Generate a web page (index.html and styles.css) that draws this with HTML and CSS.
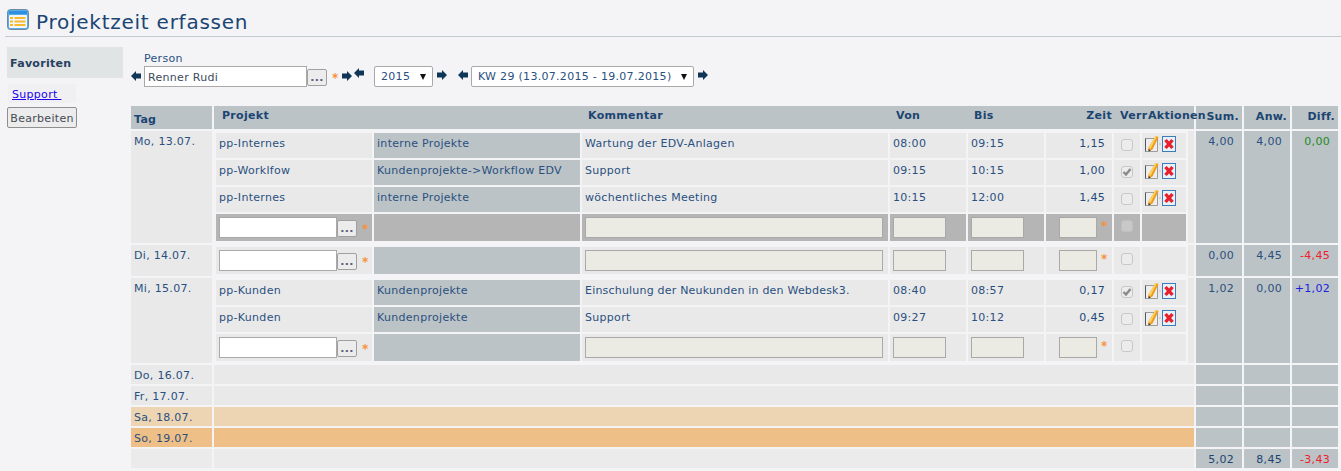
FILE: index.html
```html
<!DOCTYPE html>
<html lang="de">
<head>
<meta charset="utf-8">
<title>Projektzeit erfassen</title>
<link rel="stylesheet" href="styles.css">
</head>
<body>
<svg class="defs" width="0" height="0" aria-hidden="true">
  <defs>
    <symbol id="arrow-r" viewBox="0 0 10 10"><path d="M0 2.500H5V0L10 5 5 10V7.500H0Z" fill="#0f3657"/></symbol>
    <symbol id="arrow-l" viewBox="0 0 10 10"><path d="M10 2.500H5V0L0 5 5 10V7.500H10Z" fill="#0f3657"/></symbol>
    <symbol id="edit" viewBox="0 0 16 16">
      <path d="M.5 2.500H12.500V15.500H.5Z" fill="#ededf0" stroke="#9a9ca0"/>
      <path d="M.5 2.500V15.500" stroke="#55575c"/>
      <path d="M14.500 6.500 16 8 14.500 9.500Z" fill="#c4c4c4"/>
      <path d="M10.500 0 13.500 1 7.500 13.500 3.500 15.500 3.500 11.500Z" fill="#f09a1c"/>
      <path d="M10.500 0 11.800.4 5.500 13 3.500 11.500Z" fill="#fbd35a"/>
      <path d="M3.500 15.500 3.500 13 5.800 14.500Z" fill="#3a3a3a"/>
    </symbol>
    <symbol id="delete" viewBox="0 0 14 16">
      <rect x=".5" y=".5" width="13" height="15" fill="#e6f1fa" stroke="#3d7cb8"/>
      <path d="M3.500 4 10.500 12M10.500 4 3.500 12" stroke="#e8202c" stroke-width="3.400"/>
    </symbol>
    <symbol id="check" viewBox="0 0 12 12"><path d="M2.500 6 5 8.500 9.500 3" fill="none" stroke="#8a8a8a" stroke-width="2.400"/></symbol>
  </defs>
</svg>

<header class="page-head">
  <svg class="head-icon" viewBox="0 0 22 22" aria-hidden="true">
    <rect x=".5" y=".5" width="21" height="20" rx="3" fill="#5badea" stroke="#6d8aa0"/>
    <rect x="2" y="2" width="18" height="3" fill="#2f8fe0"/>
    <rect x="2" y="6" width="18" height="13" rx="1" fill="#f3f7fb"/>
    <path d="M3 8H6V10H3ZM3 11.500H6V13.500H3ZM3 15H6V17H3ZM7.500 8H18.500V10H7.500ZM7.500 11.500H18.500V13.500H7.500ZM7.500 15H18.500V17H7.500Z" fill="#f7b92e"/>
  </svg>
  <h1 class="page-title">Projektzeit erfassen</h1>
</header>

<div class="page-body">
  <aside class="sidebar">
    <div class="fav-title">Favoriten</div>
    <div class="fav-item"><a href="#" class="fav-link">Support&nbsp;</a></div>
    <button class="btn-edit" type="button">Bearbeiten</button>
  </aside>

  <main class="content">
    <div class="filters">
      <svg class="arrow arrow-first"><use href="#arrow-l"/></svg>
      <div class="person">
        <label class="person-label">Person</label>
        <div class="picker">
          <input class="field person-input" type="text" value="Renner Rudi">
          <button class="dots" type="button">...</button>
          <span class="req">*</span>
        </div>
      </div>
      <svg class="arrow arrow-next"><use href="#arrow-r"/></svg>
      <svg class="arrow arrow-raised"><use href="#arrow-l"/></svg>
      <div class="select select-year"><span>2015</span><i class="caret"></i></div>
      <svg class="arrow arrow-year"><use href="#arrow-r"/></svg>
      <svg class="arrow arrow-week"><use href="#arrow-l"/></svg>
      <div class="select select-week"><span>KW 29 (13.07.2015 - 19.07.2015)</span><i class="caret"></i></div>
      <svg class="arrow arrow-last"><use href="#arrow-r"/></svg>
    </div>

    <table class="sheet">
      <colgroup><col class="c-day"><col class="c-main"><col class="c-sum"><col class="c-sum"><col class="c-sum"></colgroup>
      <thead>
        <tr>
          <th class="h-day">Tag</th>
          <th class="h-main">
            <div class="h-inner">
              <span class="h-projekt">Projekt</span>
              <span class="h-komm">Kommentar</span>
              <span class="h-von">Von</span>
              <span class="h-bis">Bis</span>
              <span class="h-zeit">Zeit</span>
              <span class="h-verr">Verr</span>
              <span class="h-akt">Aktionen</span>
            </div>
          </th>
          <th class="h-num">Sum.</th>
          <th class="h-num">Anw.</th>
          <th class="h-num">Diff.</th>
        </tr>
      </thead>
      <tbody>
        <tr>
          <td class="day">Mo, 13.07.</td>
          <td class="main">
            <div class="detail">
              <table class="entries">
                <colgroup><col class="e1"><col class="e2"><col class="e3"><col class="e4"><col class="e4"><col class="e5"><col class="e6"><col class="e7"></colgroup>
                <tr>
                  <td>pp-Internes</td><td class="cat">interne Projekte</td><td>Wartung der EDV-Anlagen</td><td>08:00</td><td>09:15</td><td class="zeit">1,15</td>
                  <td class="chk"><span class="box"></span></td>
                  <td class="act"><svg class="i-edit"><use href="#edit"/></svg><svg class="i-del"><use href="#delete"/></svg></td>
                </tr>
                <tr>
                  <td>pp-Worklfow</td><td class="cat">Kundenprojekte-&gt;Workflow EDV</td><td>Support</td><td>09:15</td><td>10:15</td><td class="zeit">1,00</td>
                  <td class="chk"><span class="box"><svg class="i-check"><use href="#check"/></svg></span></td>
                  <td class="act"><svg class="i-edit"><use href="#edit"/></svg><svg class="i-del"><use href="#delete"/></svg></td>
                </tr>
                <tr>
                  <td>pp-Internes</td><td class="cat">interne Projekte</td><td>wöchentliches Meeting</td><td>10:15</td><td>12:00</td><td class="zeit">1,45</td>
                  <td class="chk"><span class="box"></span></td>
                  <td class="act"><svg class="i-edit"><use href="#edit"/></svg><svg class="i-del"><use href="#delete"/></svg></td>
                </tr>
                <tr class="new active">
                  <td><div class="picker"><input class="field proj-input" type="text"><button class="dots" type="button">...</button><span class="req">*</span></div></td>
                  <td class="cat"></td>
                  <td><input class="field off komm-input" type="text"></td>
                  <td><input class="field off time-input" type="text"></td>
                  <td><input class="field off time-input" type="text"></td>
                  <td class="zeit-new"><input class="field off zeit-input" type="text"><span class="req">*</span></td>
                  <td class="chk"><span class="box"></span></td>
                  <td></td>
                </tr>
              </table>
              <div class="strip"></div>
            </div>
          </td>
          <td class="num">4,00</td><td class="num">4,00</td><td class="num pos">0,00</td>
        </tr>
        <tr>
          <td class="day">Di, 14.07.</td>
          <td class="main">
            <div class="detail">
              <table class="entries">
                <colgroup><col class="e1"><col class="e2"><col class="e3"><col class="e4"><col class="e4"><col class="e5"><col class="e6"><col class="e7"></colgroup>
                <tr class="new">
                  <td><div class="picker"><input class="field proj-input" type="text"><button class="dots" type="button">...</button><span class="req">*</span></div></td>
                  <td class="cat"></td>
                  <td><input class="field off komm-input" type="text"></td>
                  <td><input class="field off time-input" type="text"></td>
                  <td><input class="field off time-input" type="text"></td>
                  <td class="zeit-new"><input class="field off zeit-input" type="text"><span class="req">*</span></td>
                  <td class="chk"><span class="box"></span></td>
                  <td></td>
                </tr>
              </table>
              <div class="strip"></div>
            </div>
          </td>
          <td class="num">0,00</td><td class="num">4,45</td><td class="num neg">-4,45</td>
        </tr>
        <tr>
          <td class="day">Mi, 15.07.</td>
          <td class="main">
            <div class="detail">
              <table class="entries">
                <colgroup><col class="e1"><col class="e2"><col class="e3"><col class="e4"><col class="e4"><col class="e5"><col class="e6"><col class="e7"></colgroup>
                <tr>
                  <td>pp-Kunden</td><td class="cat">Kundenprojekte</td><td class="tight">Einschulung der Neukunden in den Webdesk3.</td><td>08:40</td><td>08:57</td><td class="zeit">0,17</td>
                  <td class="chk"><span class="box"><svg class="i-check"><use href="#check"/></svg></span></td>
                  <td class="act"><svg class="i-edit"><use href="#edit"/></svg><svg class="i-del"><use href="#delete"/></svg></td>
                </tr>
                <tr>
                  <td>pp-Kunden</td><td class="cat">Kundenprojekte</td><td>Support</td><td>09:27</td><td>10:12</td><td class="zeit">0,45</td>
                  <td class="chk"><span class="box"></span></td>
                  <td class="act"><svg class="i-edit"><use href="#edit"/></svg><svg class="i-del"><use href="#delete"/></svg></td>
                </tr>
                <tr class="new">
                  <td><div class="picker"><input class="field proj-input" type="text"><button class="dots" type="button">...</button><span class="req">*</span></div></td>
                  <td class="cat"></td>
                  <td><input class="field off komm-input" type="text"></td>
                  <td><input class="field off time-input" type="text"></td>
                  <td><input class="field off time-input" type="text"></td>
                  <td class="zeit-new"><input class="field off zeit-input" type="text"><span class="req">*</span></td>
                  <td class="chk"><span class="box"></span></td>
                  <td></td>
                </tr>
              </table>
              <div class="strip"></div>
            </div>
          </td>
          <td class="num">1,02</td><td class="num">0,00</td><td class="num plus">+1,02</td>
        </tr>
        <tr class="empty">
          <td class="day">Do, 16.07.</td><td class="main fill"></td><td class="num"></td><td class="num"></td><td class="num"></td>
        </tr>
        <tr class="empty">
          <td class="day">Fr, 17.07.</td><td class="main fill"></td><td class="num"></td><td class="num"></td><td class="num"></td>
        </tr>
        <tr class="empty">
          <td class="day sat">Sa, 18.07.</td><td class="main sat"></td><td class="num"></td><td class="num"></td><td class="num"></td>
        </tr>
        <tr class="empty">
          <td class="day sun">So, 19.07.</td><td class="main sun"></td><td class="num"></td><td class="num"></td><td class="num"></td>
        </tr>
        <tr class="empty total">
          <td class="day"></td><td class="main fill"></td><td class="num strong">5,02</td><td class="num strong">8,45</td><td class="num neg">-3,43</td>
        </tr>
      </tbody>
    </table>
  </main>
</div>
</body>
</html>
```
FILE: styles.css
```css
* { box-sizing: border-box; }
html, body { margin: 0; padding: 0; }
body {
  background: #f4f4f6;
  color: #1f4a7a;
  font: 11px/14px "DejaVu Sans", Verdana, sans-serif;
  letter-spacing: .3px;
  overflow: hidden;
}
.defs { position: absolute; }

.page-head {
  height: 37px;
  margin-left: 5px;
  padding: 9px 0 0 2px;
  display: flex;
  align-items: flex-start;
  gap: 7px;
  border-bottom: 1px solid #c3cbce;
}
.head-icon { width: 22px; height: 22px; flex: none; }
.page-title {
  margin: 0;
  font-size: 20px;
  line-height: 26px;
  font-weight: normal;
  letter-spacing: .75px;
  color: #1b4572;
}

.page-body { display: flex; padding: 10px 0 0 7px; }
.sidebar { width: 116px; flex: none; margin-right: 6px; }
.fav-title {
  height: 31px;
  background: #e1e4e5;
  padding: 10px 0 0 3px;
  font-weight: bold;
  color: #26405f;
}
.fav-item {
  width: 68px;
  height: 19px;
  margin: 6px 0 4px 1px;
  padding: 4px 0 0 4px;
  background: #f0f0f2;
}
.fav-link { color: #2200ee; }
.btn-edit {
  display: block;
  width: 70px;
  height: 21px;
  padding: 1px 0 0;
  border: 1px solid #8f8f8f;
  border-radius: 2px;
  background: #ececec;
  color: #444b55;
  font: 11px "DejaVu Sans", Verdana, sans-serif;
  letter-spacing: .3px;
}

.content { flex: none; width: 1211px; }
.filters { position: relative; height: 57px; }
.person { position: absolute; left: 15px; top: 5px; }
.person-label { display: block; height: 14px; color: #2a5080; }
.picker { display: flex; align-items: center; }
.field {
  border: 1px solid #a9a9a9;
  background: #fff;
  color: #3b4a5c;
  font: 11px "DejaVu Sans", Verdana, sans-serif;
  letter-spacing: .3px;
  padding: 2px 3px 0;
  margin: 0;
  display: block;
}
.person-input { width: 163px; height: 21px; }
.dots {
  width: 20px;
  height: 17px;
  padding: 2px 0 0;
  margin: 1px 0 0 0;
  border: 1px solid #a0a0a0;
  border-radius: 2px;
  background: #ececec;
  color: #55607a;
  font: bold 11px/12px "DejaVu Sans", Verdana, sans-serif;
  letter-spacing: .3px;
}
.req {
  color: #f7913a;
  margin-left: 5px;
  font-size: 12px;
  font-weight: bold;
  line-height: 14px;
  position: relative;
  top: 1px;
}

.arrow { position: absolute; width: 10px; height: 10px; }
.arrow-first { left: 2px; top: 24px; }
.arrow-next { left: 213px; top: 24px; }
.arrow-raised { left: 225px; top: 21px; }
.arrow-year { left: 308px; top: 23px; }
.arrow-week { left: 329px; top: 23px; }
.arrow-last { left: 569px; top: 23px; }

.select {
  position: absolute;
  top: 19px;
  height: 21px;
  background: #fff;
  border: 1px solid #a9a9a9;
  border-radius: 2px;
  padding: 3px 0 0 6px;
  color: #2a5080;
  white-space: nowrap;
}
.select-year { left: 245px; width: 59px; }
.select-week { left: 342px; width: 223px; }
.caret {
  position: absolute;
  right: 6px;
  top: 7px;
  width: 0;
  height: 0;
  border-left: 3.500px solid transparent;
  border-right: 3.500px solid transparent;
  border-top: 6px solid #111;
}

.sheet {
  width: 1211px;
  table-layout: fixed;
  border-collapse: separate;
  border-spacing: 2px;
}
.c-day { width: 81px; }
.c-main { width: 980px; }
.c-sum { width: 46px; }
.sheet > thead th {
  height: 23px;
  padding: 0;
  background: #bbc3c6;
  color: #1b4572;
  font-weight: bold;
  vertical-align: top;
}
.h-day { text-align: left; padding: 7px 0 0 3px !important; }
.h-main { text-align: left; }
.h-inner { position: relative; height: 23px; }
.h-inner span { position: absolute; top: 3px; white-space: nowrap; }
.h-projekt { left: 8px; }
.h-komm { left: 374px; }
.h-von { left: 682px; }
.h-bis { left: 760px; }
.h-zeit { right: 82px; }
.h-verr { left: 906px; }
.h-akt { left: 934px; z-index: 1; }
.h-num { text-align: right; padding: 4px 3px 0 0 !important; }

.sheet > tbody > tr > td { padding: 0; vertical-align: top; }
.day { background: #e9e9e9; padding: 4px 0 0 3px !important; color: #2a5080; }
.num { background: #bbc3c6; text-align: right; padding: 4px 8px 0 0 !important; color: #2a5080; }
.pos { color: #1e8a1e; }
.neg { color: #f0202c; }
.plus { color: #2020e0; }
.empty > td { height: 19px; }
.fill { background: #e9e9e9; }
.total .fill, .total .day { background: #ebebeb; }
.sat { background: #edd5b3 !important; }
.sun { background: #efbf88 !important; }
.strong { color: #1b4572; }

.detail { display: flex; align-items: stretch; }
.strip { width: 6px; flex: none; background: #e9e9e9; }
.entries {
  width: 974px;
  flex: none;
  table-layout: fixed;
  border-collapse: separate;
  border-spacing: 2px;
}
.e1 { width: 156px; }
.e2 { width: 206px; }
.e3 { width: 306px; }
.e4 { width: 76px; }
.e5 { width: 66px; }
.e6 { width: 26px; }
.e7 { width: 44px; }
.entries td {
  height: 25px;
  padding: 4px 0 0 3px;
  background: #e9e9e9;
  vertical-align: top;
  white-space: nowrap;
  overflow: hidden;
  color: #2a5080;
}
.entries .tight { letter-spacing: .2px; }
.entries .cat { background: #bbc3c6; }
.entries .zeit { text-align: right; padding: 4px 7px 0 0; color: #1f4a7a; }
.entries .chk { padding: 6px 0 0 7px; }
.box {
  display: block;
  width: 12px;
  height: 12px;
  border: 1px solid #c8c8c8;
  border-radius: 3px;
  background: #ececec;
  position: relative;
}
.i-check { position: absolute; left: -1px; top: -1px; width: 12px; height: 12px; }
.entries .act { padding: 3px 0 0 3px; }
.i-edit { width: 16px; height: 16px; display: inline-block; vertical-align: top; }
.i-del { width: 14px; height: 16px; display: inline-block; vertical-align: top; margin-left: 1px; }

.entries .new > td { height: 27px; padding: 3px 0 0 3px; }
.active > td { background: #b5b5b5; }
.entries .active .cat { background: #b5b5b5; }
.active .chk .box { background: #c8c8c8; border-color: #c0c0c0; }
.entries .new .chk { padding: 6px 0 0 7px; }
.proj-input { width: 118px; height: 21px; }
.off { background: #ebebe4; }
.komm-input { width: 298px; height: 21px; }
.time-input { width: 53px; height: 21px; }
.zeit-input { width: 38px; height: 21px; margin-left: 10px; display: inline-block; vertical-align: top; }
.zeit-new .req { vertical-align: top; margin-left: 4px; top: 2px; }
```
